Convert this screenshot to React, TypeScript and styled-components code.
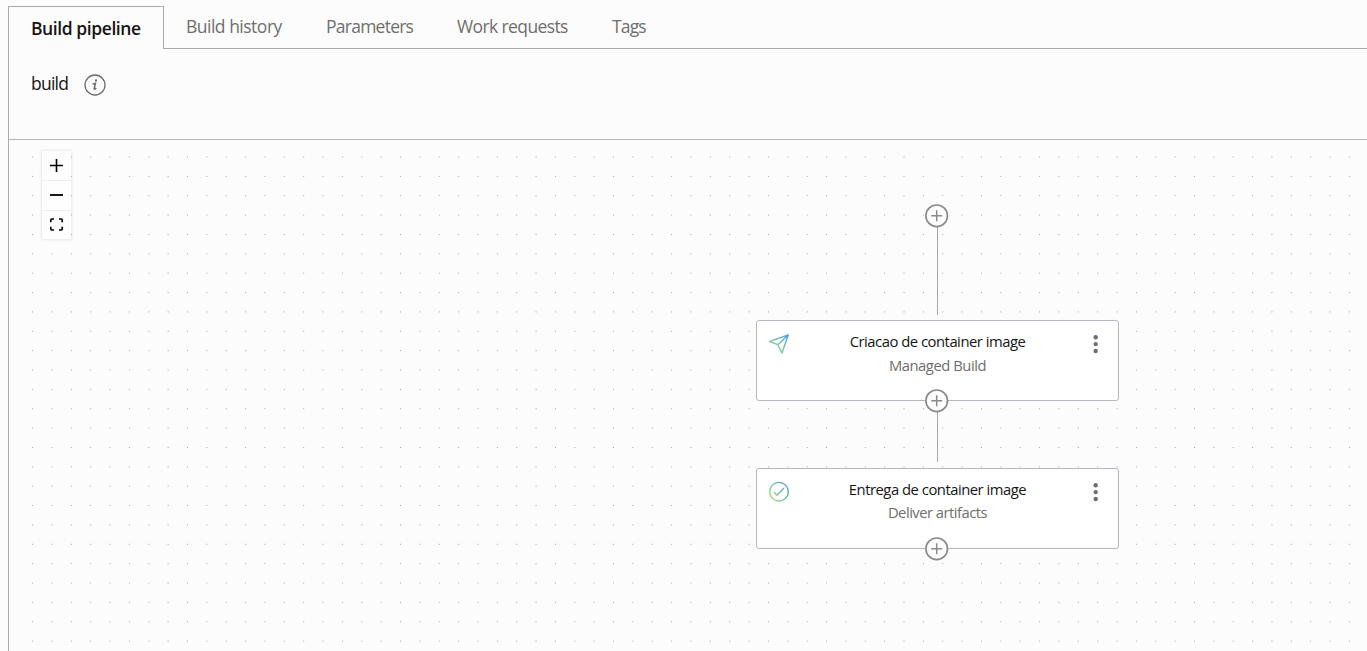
import React from "react";
import styled, { createGlobalStyle } from "styled-components";

const GlobalStyle = createGlobalStyle`
  * { box-sizing: border-box; }
  body {
    margin: 0;
    background: #fcfcfc;
    color: #161513;
    font-family: "Segoe UI", "Open Sans", "Noto Sans", sans-serif;
    overflow: hidden;
  }
  button { font: inherit; color: inherit; background: none; border: 0; padding: 0; display: block; }
`;

const Page = styled.main`
  display: flex;
  flex-direction: column;
  height: 651px;
  padding: 6px 0 0 8px;
`;

const TabBar = styled.nav`
  display: flex;
  flex: 0 0 43px;
`;

const Tab = styled.button<{ $active?: boolean; $width: number; $spacing: number }>`
  flex: 0 0 ${(p) => p.$width}px;
  height: 43px;
  padding: ${(p) => (p.$active ? "0 0 1px 22px" : "0 0 2px 22px")};
  text-align: left;
  white-space: nowrap;
  font-size: 17.5px;
  line-height: 40px;
  letter-spacing: ${(p) => p.$spacing}px;
  font-weight: ${(p) => (p.$active ? 600 : 400)};
  color: ${(p) => (p.$active ? "#161513" : "#706e6b")};
  border-style: solid;
  border-color: #aaa;
  border-width: ${(p) => (p.$active ? "1px 1px 0 1px" : "0 0 1px 0")};
`;

const TabFill = styled.div`
  flex: 1;
  border-bottom: 1px solid #aaa;
`;

const Panel = styled.section`
  flex: 1;
  display: flex;
  flex-direction: column;
  min-height: 0;
  border-left: 1px solid #aaa;
`;

const Heading = styled.header`
  display: flex;
  align-items: flex-start;
  gap: 16px;
  flex: 0 0 91px;
  padding: 22px 22px 0;
  border-bottom: 1px solid #b3b5ba;
`;

const PipelineName = styled.span`
  width: 37px;
  font-size: 17.5px;
  line-height: 25px;
  letter-spacing: -0.75px;
  white-space: nowrap;
`;

const InfoIcon = styled.svg`
  margin-top: 3px;
`;

const Canvas = styled.div`
  position: relative;
  flex: 1;
  margin-left: 22px;
  overflow: hidden;
`;

const Grid = styled.svg`
  position: absolute;
  inset: 0;
  width: 100%;
  height: 100%;
`;

const Controls = styled.div`
  position: absolute;
  left: 11px;
  top: 11px;
  width: 29px;
  display: flex;
  flex-direction: column;
  background: #fefefe;
  box-shadow: 0 0 2px 1px rgba(0, 0, 0, 0.08);
`;

const ControlButton = styled.button`
  display: flex;
  align-items: center;
  justify-content: center;
  height: 30px;
  border-bottom: 1px solid #eee;
  &:last-child { height: 28px; padding-bottom: 1px; border-bottom: 0; }
`;

const Node = styled.article<{ $top: number }>`
  position: absolute;
  left: 725px;
  top: ${(p) => p.$top}px;
  width: 363px;
  height: 81px;
  display: grid;
  grid-template-columns: 44px 1fr 44px;
  background: #fff;
  border: 1px solid #b4b8c1;
  border-radius: 3px;
`;

const NodeIcon = styled.svg`
  margin: 12px 0 0 11px;
`;

const NodeText = styled.div`
  padding-top: 8px;
  text-align: center;
  white-space: nowrap;
`;

const NodeTitle = styled.div`
  font-size: 14.8px;
  line-height: 24px;
  letter-spacing: -0.48px;
`;

const NodeKind = styled.div<{ $spacing: number; $offset?: number }>`
  margin-top: ${(p) => p.$offset ?? 0}px;
  font-size: 14.8px;
  line-height: 23px;
  letter-spacing: ${(p) => p.$spacing}px;
  color: #706e6b;
`;

const MenuIcon = styled.svg`
  margin: 13px 0 0 13px;
`;

const Connector = styled.div<{ $top: number; $height: number }>`
  position: absolute;
  left: 906px;
  top: ${(p) => p.$top}px;
  width: 1px;
  height: ${(p) => p.$height}px;
  background: #a6a6a6;
`;

const AddButton = styled.button<{ $top: number }>`
  position: absolute;
  left: 893px;
  top: ${(p) => p.$top}px;
  width: 25px;
  height: 25px;
`;

const tabs = [
  { label: "Build history", width: 140, spacing: -0.5 },
  { label: "Parameters", width: 131, spacing: -0.75 },
  { label: "Work requests", width: 155, spacing: -0.61 },
  { label: "Tags", width: 78, spacing: -0.85 },
];

function Add({ top }: { top: number }) {
  return (
    <AddButton $top={top} aria-label="Add stage">
      <svg width="25" height="25" viewBox="0 0 25 25" fill="none" stroke="#8a8a8a">
        <circle cx="12.7" cy="12.8" r="10.8" fill="#fdfdfd" strokeWidth="1.7" />
        <path d="M12.7 7.3v11M7.2 12.8h11" strokeWidth="1.5" />
      </svg>
    </AddButton>
  );
}

function Menu() {
  return (
    <MenuIcon width="16" height="22" viewBox="0 0 16 22" fill="#706e6b">
      <circle cx="8.7" cy="3.3" r="2.2" />
      <circle cx="8.7" cy="10.1" r="2.2" />
      <circle cx="8.7" cy="17" r="2.2" />
    </MenuIcon>
  );
}

export default function App() {
  return (
    <>
      <GlobalStyle />
      <Page>
        <TabBar>
          <Tab $active $width={156} $spacing={-0.42}>Build pipeline</Tab>
          {tabs.map((t) => (
            <Tab key={t.label} $width={t.width} $spacing={t.spacing}>{t.label}</Tab>
          ))}
          <TabFill />
        </TabBar>
        <Panel>
          <Heading>
            <PipelineName>build</PipelineName>
            <InfoIcon width="22" height="22" viewBox="0 0 22 22" fill="none" stroke="#6f6d6a">
              <circle cx="11" cy="11" r="10" strokeWidth="1.3" />
              <circle cx="12" cy="6.5" r="1.15" fill="#6f6d6a" stroke="none" />
              <path d="M8.6 10.3c1.2-.5 2-.8 2.9-1l-1.3 5c-.3 1.3.7 1 2.1-.1" strokeWidth="1.5" />
            </InfoIcon>
          </Heading>
          <Canvas>
            <Grid>
              <defs>
                <pattern id="dots" x="1.1" y="16.5" width="19.365" height="19.365" patternUnits="userSpaceOnUse">
                  <circle cx="0.5" cy="0.5" r="0.5" fill="#81818a" />
                </pattern>
              </defs>
              <rect width="100%" height="100%" fill="url(#dots)" />
            </Grid>
            <Controls>
              <ControlButton aria-label="Zoom in">
                <svg width="13" height="13" viewBox="0 0 13 13" stroke="#000" strokeWidth="1.6">
                  <path d="M6.5 0v13M0 6.5h13" />
                </svg>
              </ControlButton>
              <ControlButton aria-label="Zoom out">
                <svg width="13" height="13" viewBox="0 0 13 13" stroke="#000" strokeWidth="1.8">
                  <path d="M0 6h13" />
                </svg>
              </ControlButton>
              <ControlButton aria-label="Fit view">
                <svg width="13" height="13" viewBox="0 0 13 13" fill="none" stroke="#000" strokeWidth="1.6">
                  <path d="M.8 4.2V2q0-1 1-1H4M9 1h2.2q1 0 1 1v2.2M12.2 8.8V11q0 1-1 1H9M4 12H1.8q-1 0-1-1V8.8" />
                </svg>
              </ControlButton>
            </Controls>
            <Connector $top={86} $height={89} />
            <Connector $top={270} $height={52} />
            <Node $top={180}>
              <NodeIcon width="22" height="22" viewBox="0 0 22 22" fill="none">
                <defs>
                  <linearGradient id="send" x1="21" y1="1" x2="8" y2="14" gradientUnits="userSpaceOnUse">
                    <stop stopColor="#4a98ec" />
                    <stop offset="1" stopColor="#82cf9b" />
                  </linearGradient>
                </defs>
                <path d="M20.2 1.9L1.6 8.5l8.2 3.2 4.2 8.4zM20.2 1.9L9.8 11.7" stroke="url(#send)" strokeWidth="1.4" strokeLinejoin="round" />
              </NodeIcon>
              <NodeText>
                <NodeTitle>Criacao de container image</NodeTitle>
                <NodeKind $spacing={-0.46} $offset={1}>Managed Build</NodeKind>
              </NodeText>
              <Menu />
            </Node>
            <Node $top={328}>
              <NodeIcon width="22" height="22" viewBox="0 0 22 22" fill="none">
                <defs>
                  <linearGradient id="check" x1="19" y1="2" x2="3" y2="18" gradientUnits="userSpaceOnUse">
                    <stop stopColor="#4a9bea" />
                    <stop offset="1" stopColor="#a1dc75" />
                  </linearGradient>
                </defs>
                <circle cx="11" cy="10.7" r="9.3" stroke="url(#check)" strokeWidth="1.4" />
                <path d="M6 11.2l3 3 7-7.3" stroke="url(#check)" strokeWidth="1.4" />
              </NodeIcon>
              <NodeText>
                <NodeTitle>Entrega de container image</NodeTitle>
                <NodeKind $spacing={-0.52}>Deliver artifacts</NodeKind>
              </NodeText>
              <Menu />
            </Node>
            <Add top={63} />
            <Add top={248} />
            <Add top={395.5} />
          </Canvas>
        </Panel>
      </Page>
    </>
  );
}
